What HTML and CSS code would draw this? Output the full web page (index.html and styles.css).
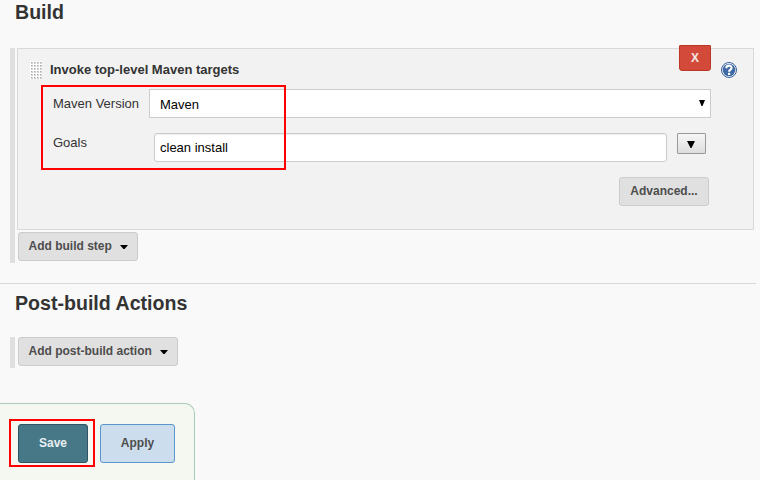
FILE: index.html
```html
<!DOCTYPE html>
<html lang="en">
<head>
<meta charset="utf-8">
<title>Build configuration</title>
<link rel="stylesheet" href="styles.css">
</head>
<body>
<main class="config">
  <section class="section">
    <h2 class="heading">Build</h2>
    <div class="steps">
      <div class="panel">
        <div class="panel-head">
          <svg class="handle" width="12" height="18" viewBox="0 0 12 18">
            <defs><pattern id="dots" width="3" height="3" patternUnits="userSpaceOnUse">
              <rect width="3" height="3" fill="#fff"/><rect x="1" y="1" width="2" height="2" fill="#d2d2d0"/><rect x="1" y="1" width="1" height="1" fill="#aaa"/>
            </pattern></defs>
            <rect width="12" height="18" fill="url(#dots)"/>
          </svg>
          <span class="panel-title">Invoke top-level Maven targets</span>
          <svg class="help" width="16" height="16" viewBox="0 0 16 16">
            <circle cx="8" cy="8" r="7.5" fill="#fff" stroke="#365f9c"/>
            <circle cx="8" cy="8" r="6.3" fill="#3f6aa5"/>
            <path d="M5.3 6.2C5.3 2.7 10.8 2.8 10.6 6C10.5 7.7 8.1 7.7 8.1 9.7" fill="none" stroke="#fff" stroke-width="2.1"/>
            <rect x="7" y="10.8" width="2.2" height="2.2" fill="#fff"/>
          </svg>
        </div>
        <div class="row">
          <label class="label" for="version">Maven Version</label>
          <div class="select-wrap">
            <select class="select" id="version"><option>Maven</option></select>
            <svg class="select-arrow" width="6" height="6" viewBox="0 0 6 6"><path d="M0 0H6L3.5 6H2.5Z"/></svg>
          </div>
        </div>
        <div class="row row-goals">
          <label class="label label-goals" for="goals">Goals</label>
          <input class="input" id="goals" value="clean install">
          <button class="expand" aria-label="Expand"><svg width="8" height="7" viewBox="0 0 8 7"><path d="M0 0H8L4.5 7H3.5Z"/></svg></button>
        </div>
        <div class="panel-foot"><button class="button advanced">Advanced...</button></div>
        <button class="delete">X</button>
        <div class="mark mark-fields"></div>
      </div>
      <button class="button add-step">Add build step<svg class="caret" width="8" height="4" viewBox="0 0 8 4"><path d="M0 0H8L4.6 4H3.4Z"/></svg></button>
    </div>
  </section>
  <section class="section section-post">
    <h2 class="heading">Post-build Actions</h2>
    <div class="steps steps-post">
      <button class="button add-post">Add post-build action<svg class="caret" width="8" height="4" viewBox="0 0 8 4"><path d="M0 0H8L4.6 4H3.4Z"/></svg></button>
    </div>
  </section>
</main>
<footer class="actions">
  <button class="save">Save</button>
  <button class="apply">Apply</button>
  <div class="mark mark-save"></div>
</footer>
</body>
</html>
```
FILE: styles.css
```css
* { box-sizing: border-box; }
body {
  margin: 0;
  height: 480px;
  overflow: hidden;
  background: #f9f9f9;
  color: #333;
  font: 13px/18px "Liberation Sans", Arial, sans-serif;
}
button, input, select { margin: 0; font-family: inherit; }
svg { display: block; }
.config { width: 756px; height: 403px; }
.heading {
  margin: 0 0 24px 15px;
  font-size: 19.6px;
  line-height: 24px;
}
.steps {
  height: 215px;
  margin: 0 2px 0 10px;
  padding-left: 2px;
  border-left: 5px solid #e0e0e0;
}
.section-post { margin-top: 20px; padding-top: 7px; border-top: 1px solid #d9d9d9; }
.section-post .heading { margin-bottom: 22px; }
.steps-post { height: 31px; }
.panel {
  position: relative;
  height: 182px;
  padding: 12px 16px 0 12px;
  border: 1px solid #d9d9d9;
  background: #f2f2f2;
}
.panel-head { display: flex; height: 28px; }
.panel-title { margin-left: 8px; font-weight: bold; }
.help { margin: 1px 0 0 auto; }
.row { display: flex; height: 29px; margin: 0 26px 0 23px; }
.row-goals { margin-top: 15px; }
.label { width: 96px; padding-top: 6px; }
.label-goals { width: 101px; padding-top: 1px; }
.select-wrap { position: relative; flex: 1; }
.select {
  appearance: none;
  width: 100%;
  height: 29px;
  padding: 2px 10px 0;
  border: 1px solid #ccc;
  border-radius: 0;
  background: #fff;
  color: #000;
  font-size: 13px;
}
.select-arrow { position: absolute; right: 6px; top: 11px; }
.input {
  width: 513px;
  height: 29px;
  padding: 0 5px;
  border: 1px solid #ccc;
  border-radius: 3px;
  box-shadow: inset 0 1px 1px #eee;
  font-size: 13px;
  color: #000;
}
.expand {
  display: flex;
  align-items: center;
  justify-content: center;
  width: 29px;
  height: 21px;
  margin-left: 10px;
  padding: 1px 1px 0 0;
  border: 1px solid #999;
  border-radius: 1px;
  background: linear-gradient(#f6f6f6, #dedede);
}
.panel-foot { display: flex; justify-content: flex-end; margin: 15px 28px 0 0; }
.button {
  display: flex;
  align-items: center;
  height: 29px;
  padding: 0 9.5px 1px;
  border: 1px solid #ccc;
  border-radius: 3px;
  background: #e0e0e0;
  color: #4d4d4d;
  font-size: 12px;
  font-weight: bold;
  white-space: nowrap;
}
.advanced { width: 90px; justify-content: center; }
.add-step { width: 120px; margin: 2px 0 0 1px; }
.add-post { width: 160px; margin-left: 1px; }
.caret { flex: none; margin: 2px 0 0 auto; fill: #000; }
.delete {
  position: absolute;
  top: -4px;
  right: 42px;
  width: 32px;
  height: 26px;
  padding: 0;
  border: 1px solid #bd3527;
  border-radius: 1px 1px 3px 3px;
  background: #d34a3a;
  color: #f4e6e4;
  font-size: 12px;
  font-weight: bold;
}
.mark { position: absolute; border: 2px solid #f00; pointer-events: none; }
.mark-fields { left: 23px; top: 36px; width: 245px; height: 85px; }
.actions {
  position: relative;
  display: flex;
  gap: 12px;
  width: 195px;
  height: 77px;
  padding: 20px 0 0 18px;
  border: solid #a9cbb8;
  border-width: 1px 1px 0 0;
  border-top-right-radius: 10px;
  background: #f5f8f0;
}
.save, .apply {
  height: 39px;
  padding: 0 0 1px;
  border: 1px solid #2f5663;
  border-radius: 3px;
  background: #467888;
  color: #e9eff1;
  font-size: 12px;
  font-weight: bold;
}
.save { width: 70px; }
.apply { width: 75px; border-color: #5c94cc; background: #ccdded; color: #4d4d4d; }
.mark-save { left: 9px; top: 15px; width: 86px; height: 48px; }
```
